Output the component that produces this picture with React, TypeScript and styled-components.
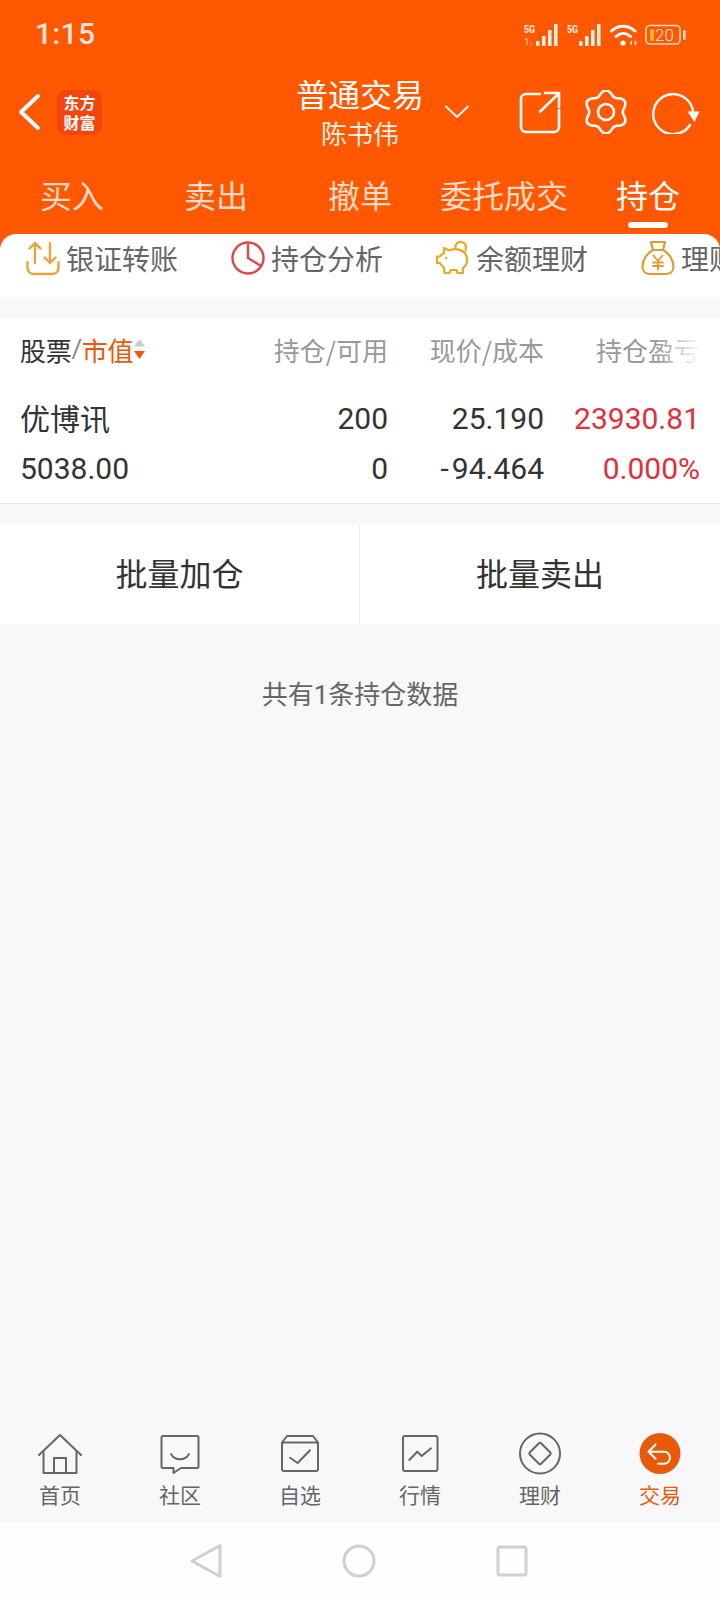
import React from "react";
import styled, { createGlobalStyle } from "styled-components";

const CJK = `"Noto Sans CJK SC", "Noto Sans", sans-serif`;
const NUM = `Roboto, "Noto Sans CJK SC", sans-serif`;
const ORANGE = "#ff5800";

const Global = createGlobalStyle`
  html, body { margin: 0; padding: 0; background: #f7f8fa; }
  * { box-sizing: border-box; }
`;

const Page = styled.div`
  width: 720px;
  height: 1600px;
  display: flex;
  flex-direction: column;
  overflow: hidden;
  background: #f7f8fa;
  font-family: ${CJK};
`;

const TopArea = styled.header`
  background: ${ORANGE};
  color: #fff;
`;

const StatusBar = styled.div`
  height: 70px;
  padding: 0 34px 4px 35px;
  display: flex;
  align-items: center;
  justify-content: space-between;
`;

const Clock = styled.span`
  font-family: ${NUM};
  font-size: 30px;
  font-weight: 500;
  letter-spacing: 0.3px;
  color: rgba(255, 255, 255, 0.85);
`;

const StatusIcons = styled.div`
  display: flex;
  align-items: center;
  gap: 7px;
  margin-top: 4px;
  svg { display: block; }
`;

const Header = styled.div`
  height: 84px;
  padding: 0 20px 0 18px;
  display: flex;
  align-items: center;
`;

const LeftGroup = styled.div`
  flex: none;
  display: flex;
  align-items: center;
  gap: 16px;
  width: 257px;
`;

const Logo = styled.div`
  width: 45px;
  height: 45px;
  border-radius: 9px;
  background: #f5450f;
  display: flex;
  flex-direction: column;
  align-items: center;
  justify-content: center;
  font-size: 16px;
  line-height: 20px;
  font-weight: 700;
  color: #fff;
`;

const TitleBlock = styled.div`
  flex: none;
  width: 170px;
  padding-bottom: 3px;
  display: flex;
  flex-direction: column;
  align-items: center;
`;

const Title = styled.div`
  font-size: 32px;
  line-height: 42px;
  white-space: nowrap;
`;

const SubTitle = styled.div`
  margin-top: 3px;
  font-size: 26px;
  line-height: 32px;
  color: rgba(255, 255, 255, 0.92);
`;

const Caret = styled.svg`
  margin-right: 49px;
  flex: none;
`;

const HeaderActions = styled.div`
  flex: none;
  display: flex;
  align-items: center;
  gap: 22px;
  svg { display: block; }
`;

const Tabs = styled.nav`
  height: 80px;
  display: grid;
  grid-template-columns: repeat(5, 1fr);
  padding-top: 18px;
`;

const Tab = styled.div<{ $active?: boolean }>`
  position: relative;
  text-align: center;
  font-size: 32px;
  line-height: 44px;
  white-space: nowrap;
  color: ${(p) => (p.$active ? "#fff" : "rgba(255,255,255,0.78)")};
  ${(p) =>
    p.$active &&
    `&::after {
      content: "";
      position: absolute;
      left: 50%;
      margin-left: -20px;
      bottom: 6px;
      width: 40px;
      height: 6px;
      border-radius: 3px;
      background: #fff;
    }`}
`;

const QuickWrap = styled.div`
  background: ${ORANGE};
`;

const QuickBar = styled.div`
  height: 64px;
  background: #fff;
  border-radius: 16px 16px 0 0;
  padding: 5px 0 0 26px;
  display: flex;
  align-items: flex-start;
  gap: 53px;
  overflow: hidden;
`;

const QuickItem = styled.div`
  flex: none;
  display: flex;
  align-items: center;
  gap: 6px;
  font-size: 28px;
  line-height: 38px;
  color: #666;
  svg { display: block; flex: none; }
`;

const TableCard = styled.section`
  margin-top: 21px;
  background: #fff;
  border-bottom: 1px solid #e8e9ec;
  padding-bottom: 9px;
`;

const TableGrid = styled.div`
  display: grid;
  grid-template-columns: 1fr 156px 156px 156px;
  padding: 0 20px;
  align-items: center;
`;

const HeaderRow = styled(TableGrid)`
  position: relative;
  height: 64px;
  margin-bottom: 11px;
  padding-bottom: 4px;
  font-size: 26px;
  color: #999;
  &::after {
    content: "";
    position: absolute;
    right: 12px;
    top: 0;
    bottom: 0;
    width: 52px;
    background: linear-gradient(to right, rgba(255,255,255,0), #fff 85%);
  }
`;

const HeadName = styled.div`
  display: flex;
  align-items: center;
  color: #333;
  letter-spacing: -0.3px;
`;

const Slash = styled.span`
  color: #888;
  font-family: ${NUM};
`;

const SortKey = styled.span`
  color: #e8590c;
`;

const HeadCell = styled.div`
  text-align: right;
  white-space: nowrap;
`;

const DataRow = styled(TableGrid)`
  height: 50px;
  padding-bottom: 2px;
`;

const NameCell = styled.div<{ $lift?: boolean }>`
  font-family: ${NUM};
  font-size: 30px;
  color: #333;
  ${(p) => p.$lift && "padding-bottom: 3px;"}
`;

const NumCell = styled.div<{ $red?: boolean }>`
  font-family: ${NUM};
  font-size: 30px;
  text-align: right;
  white-space: nowrap;
  color: ${(p) => (p.$red ? "#e0303a" : "#333")};
`;

const Dash = styled.span`
  letter-spacing: 3px;
`;

const ButtonRow = styled.div`
  margin-top: 20px;
  height: 100px;
  display: grid;
  grid-template-columns: 1fr 1fr;
  background: #fff;
`;

const BatchButton = styled.div<{ $divider?: boolean }>`
  display: flex;
  align-items: center;
  justify-content: center;
  padding-bottom: 4px;
  font-size: 32px;
  color: #333;
  ${(p) => p.$divider && "border-right: 1px solid #eeeff1;"}
`;

const Note = styled.div`
  margin-top: 50px;
  text-align: center;
  font-size: 26px;
  line-height: 42px;
  color: #666;
  font-family: ${NUM};
`;

const Spacer = styled.div`
  flex: 1;
`;

const BottomNav = styled.nav`
  height: 112px;
  background: #f8f8fa;
  display: grid;
  grid-template-columns: repeat(6, 1fr);
  padding-top: 22px;
`;

const NavItem = styled.div<{ $active?: boolean }>`
  display: flex;
  flex-direction: column;
  align-items: center;
  font-size: 21px;
  line-height: 30px;
  color: ${(p) => (p.$active ? "#e8590c" : "#666")};
  svg { display: block; margin-bottom: 3px; }
`;

const SystemNav = styled.div`
  height: 78px;
  background: #fdfdfd;
  display: flex;
  align-items: center;
  justify-content: center;
  gap: 120px;
  padding-right: 3px;
  svg { display: block; }
`;

const Sig = ({ dim }: { dim?: boolean }) => (
  <svg width="36" height="24" viewBox="0 0 36 24">
    <text x="0" y="10" fontFamily="Roboto, sans-serif" fontWeight="700" fontSize="11.5" fill="#fff0e6" textLength="11" lengthAdjust="spacingAndGlyphs">5G</text>
    {dim && <text x="0" y="22" fontFamily="Roboto, sans-serif" fontWeight="700" fontSize="9" fill="#ffb48a">1↓</text>}
    <g fill="#fff0e6">
      <rect x="12" y="18" width="3.5" height="5" rx="1" />
      <rect x="18" y="13" width="3.5" height="10" />
      <rect x="24" y="7" width="3.5" height="16" />
      <rect x="30" y="1" width="3.5" height="22" />
    </g>
  </svg>
);

const Wifi = () => (
  <svg width="28" height="24" viewBox="0 0 28 24" fill="none" stroke="#fff" strokeWidth="3" strokeLinecap="round">
    <path d="M1.5 8 C8 1.5 18 1.5 25 8" />
    <path d="M6 13.5 C10.5 9.5 16 9.5 20.5 13.5" />
    <circle cx="13" cy="20" r="2.6" fill="#fff" stroke="none" />
    <path d="M19.5 20 l2.5 -3 v6 Z M27 20 l-2.5 -3 v6 Z" fill="#ffd9c0" stroke="none" />
  </svg>
);

const Battery = () => (
  <svg width="41" height="22" viewBox="0 0 41 22">
    <rect x="1" y="1.5" width="34" height="18.5" rx="4" fill="none" stroke="#ffd9c0" strokeWidth="1.6" />
    <rect x="5" y="5" width="4" height="12" rx="1" fill="#ffae35" />
    <text x="10" y="17" fontFamily="Roboto, sans-serif" fontWeight="300" fontSize="17" fill="#fff0e6">20</text>
    <rect x="38" y="6" width="2.6" height="10" rx="1.3" fill="#ffd9c0" />
  </svg>
);

const gearPath = (() => {
  const pts: string[] = [];
  for (let i = 0; i < 144; i++) {
    const t = (i / 144) * Math.PI * 2;
    const r = 19.2 + 2.4 * Math.cos(6 * t);
    pts.push(`${(22 + r * Math.sin(t)).toFixed(2)} ${(22 - r * Math.cos(t)).toFixed(2)}`);
  }
  return "M" + pts.join("L") + "Z";
})();

const Pig = () => (
  <svg width="34" height="36" viewBox="0 0 34 36" fill="none" stroke="#e8a820" strokeWidth="2.2" strokeLinejoin="round" strokeLinecap="round">
    <path d="M8 13 L8 8 L13 10.5 C19 8 27 9 30 15 C32.5 21 31 25 27 28 L27 33 H21.5 L20.5 30 H14.5 L13.5 33 H8.5 L8 27.5 C6 26.5 5 24.5 4 23 H1 V16.5 H4 C5 15 6 14 8 13 Z" />
    <circle cx="10" cy="18" r="1.2" fill="#e8a820" stroke="none" />
    <path d="M19.5 7.5 C19 3.5 22.5 1.5 25.5 2 C29 2.5 31 6 29.5 10.5" />
  </svg>
);

const Bag = () => (
  <svg width="34" height="36" viewBox="0 0 34 36" fill="none" stroke="#e09a30" strokeWidth="2.2" strokeLinejoin="round" strokeLinecap="round">
    <path d="M10 2 H24 L22 10 H12 Z" />
    <path d="M12 10 C6 13 1.5 20 1.5 27 C1.5 31.5 5 34 9 34 H25 C29 34 32.5 31.5 32.5 27 C32.5 20 28 13 22 10" />
    <path d="M12.5 15.5 L17 21 L21.5 15.5 M17 21 V29.5 M12 22.5 H22 M12 26 H22" strokeWidth="1.8" />
  </svg>
);

export default function App() {
  return (
    <Page>
      <Global />
      <TopArea>
        <StatusBar>
          <Clock>1:15</Clock>
          <StatusIcons>
            <Sig dim />
            <Sig />
            <Wifi />
            <Battery />
          </StatusIcons>
        </StatusBar>
        <Header>
          <LeftGroup>
            <svg width="23" height="38" viewBox="0 0 23 38" fill="none" stroke="#fff" strokeWidth="4" strokeLinecap="round" strokeLinejoin="round">
              <path d="M20 3 L3 19 L20 35" />
            </svg>
            <Logo>
              <span>东方</span>
              <span>财富</span>
            </Logo>
          </LeftGroup>
          <TitleBlock>
            <Title>普通交易</Title>
            <SubTitle>陈书伟</SubTitle>
          </TitleBlock>
          <Caret width="24" height="14" viewBox="0 0 24 14" fill="none" stroke="#fff" strokeWidth="1.8" strokeLinecap="round" strokeLinejoin="round">
            <path d="M1 1.5 L12 12 L23 1.5" />
          </Caret>
          <HeaderActions>
            <svg width="44" height="44" viewBox="0 0 44 44" fill="none" stroke="#fff" strokeWidth="2.6" strokeLinecap="round" strokeLinejoin="round">
              <path d="M22 4 H8 a5 5 0 0 0 -5 5 V37 a5 5 0 0 0 5 5 H36 a5 5 0 0 0 5 -5 V20" />
              <path d="M22 21.7 L41 3.3 M27 3 H41 V17" />
            </svg>
            <svg width="44" height="44" viewBox="0 0 44 44" fill="none" stroke="#fff" strokeWidth="2.6" strokeLinejoin="round">
              <path d={gearPath} />
              <circle cx="22" cy="22" r="8" />
            </svg>
            <svg width="50" height="44" viewBox="0 0 50 44" fill="none">
              <path d="M43 21 A20 20 0 1 0 40 35" stroke="#fff" strokeWidth="2.4" strokeLinecap="round" />
              <path d="M37.5 21.5 H49.5 L44.5 32 Z" fill="#fff" />
            </svg>
          </HeaderActions>
        </Header>
        <Tabs>
          <Tab>买入</Tab>
          <Tab>卖出</Tab>
          <Tab>撤单</Tab>
          <Tab>委托成交</Tab>
          <Tab $active>持仓</Tab>
        </Tabs>
      </TopArea>

      <QuickWrap>
        <QuickBar>
          <QuickItem>
            <svg width="34" height="36" viewBox="0 0 34 36" fill="none" stroke="#e8a33d" strokeWidth="2.4" strokeLinecap="round" strokeLinejoin="round">
              <path d="M1.5 22 V28 a6 6 0 0 0 6 6 H26.5 a6 6 0 0 0 6 -6 V22" />
              <path d="M9 23 V3 M3.5 8.5 L9 3 L14.5 8.5" />
              <path d="M24 3 V23 M18.5 17.5 L24 23 L29.5 17.5" />
            </svg>
            银证转账
          </QuickItem>
          <QuickItem>
            <svg width="34" height="36" viewBox="0 0 34 36" fill="none" stroke="#e0474c" strokeWidth="2.4" strokeLinecap="round" strokeLinejoin="round">
              <circle cx="17" cy="18" r="15.5" />
              <path d="M17 5 V18 L30 26" />
            </svg>
            持仓分析
          </QuickItem>
          <QuickItem>
            <Pig />
            余额理财
          </QuickItem>
          <QuickItem>
            <Bag />
            理财产品
          </QuickItem>
        </QuickBar>
      </QuickWrap>

      <TableCard>
        <HeaderRow>
          <HeadName>
            股票<Slash>/</Slash>
            <SortKey>市值</SortKey>
            <svg width="13" height="22" viewBox="0 0 13 22">
              <path d="M6.5 1 L12 8.5 H1 Z" fill="#ccc" />
              <path d="M1 13 H12 L6.5 21 Z" fill="#e8590c" />
            </svg>
          </HeadName>
          <HeadCell>持仓/可用</HeadCell>
          <HeadCell>现价/成本</HeadCell>
          <HeadCell>持仓盈亏</HeadCell>
        </HeaderRow>
        <DataRow>
          <NameCell $lift>优博讯</NameCell>
          <NumCell>200</NumCell>
          <NumCell>25.190</NumCell>
          <NumCell $red>23930.81</NumCell>
        </DataRow>
        <DataRow>
          <NameCell>5038.00</NameCell>
          <NumCell>0</NumCell>
          <NumCell><Dash>-</Dash>94.464</NumCell>
          <NumCell $red>0.000%</NumCell>
        </DataRow>
      </TableCard>

      <ButtonRow>
        <BatchButton $divider>批量加仓</BatchButton>
        <BatchButton>批量卖出</BatchButton>
      </ButtonRow>

      <Note>共有1条持仓数据</Note>
      <Spacer />

      <BottomNav>
        <NavItem>
          <svg width="44" height="44" viewBox="0 0 44 44" fill="none" stroke="#666" strokeWidth="2" strokeLinecap="round" strokeLinejoin="round">
            <path d="M1 23 L22 3 L43 23" />
            <path d="M5.5 19.5 V41 H38.5 V19.5" />
            <path d="M16 41 V26 H28 V41" />
          </svg>
          首页
        </NavItem>
        <NavItem>
          <svg width="44" height="44" viewBox="0 0 44 44" fill="none" stroke="#666" strokeWidth="2" strokeLinecap="round" strokeLinejoin="round">
            <path d="M5 4 H39 a1.5 1.5 0 0 1 1.5 1.5 V34.5 a1.5 1.5 0 0 1 -1.5 1.5 H23 L15.5 41 V36 H5 a1.5 1.5 0 0 1 -1.5 -1.5 V5.5 A1.5 1.5 0 0 1 5 4 Z" />
            <path d="M13 22 C17 29 27 29 31 22" />
          </svg>
          社区
        </NavItem>
        <NavItem>
          <svg width="44" height="44" viewBox="0 0 44 44" fill="none" stroke="#666" strokeWidth="2" strokeLinecap="round" strokeLinejoin="round">
            <path d="M4 10.5 L9 4 H35 L40 10.5" />
            <rect x="4" y="10.5" width="36" height="28.5" rx="2" />
            <path d="M12 25.7 L19.7 31 L32 18.3" />
          </svg>
          自选
        </NavItem>
        <NavItem>
          <svg width="44" height="44" viewBox="0 0 44 44" fill="none" stroke="#666" strokeWidth="2" strokeLinecap="round" strokeLinejoin="round">
            <rect x="5" y="4" width="34.5" height="35" rx="2" />
            <path d="M11.3 28 L19.3 19.7 L23.7 24 L33 16.3" />
          </svg>
          行情
        </NavItem>
        <NavItem>
          <svg width="44" height="44" viewBox="0 0 44 44" fill="none" stroke="#666" strokeWidth="2" strokeLinejoin="round">
            <circle cx="22" cy="21.5" r="20" />
            <rect x="14" y="13.5" width="16" height="16" rx="1.5" transform="rotate(45 22 21.5)" />
          </svg>
          理财
        </NavItem>
        <NavItem $active>
          <svg width="44" height="44" viewBox="0 0 44 44" fill="none">
            <circle cx="22" cy="21.5" r="20.5" fill="#e8590a" />
            <path d="M11 19.7 H26 a6 6 0 0 1 0 12 H20 M17.5 12.5 L10.5 19.7 L17.5 26.7" stroke="#fff" strokeWidth="2" strokeLinecap="round" strokeLinejoin="round" />
          </svg>
          交易
        </NavItem>
      </BottomNav>

      <SystemNav>
        <svg width="32" height="36" viewBox="0 0 32 36" fill="none" stroke="#d0d0d0" strokeWidth="3" strokeLinejoin="round">
          <path d="M30 2.5 V33.5 L2 18 Z" />
        </svg>
        <svg width="34" height="34" viewBox="0 0 34 34" fill="none" stroke="#d0d0d0" strokeWidth="3">
          <circle cx="17" cy="17" r="15" />
        </svg>
        <svg width="32" height="32" viewBox="0 0 32 32" fill="none" stroke="#d0d0d0" strokeWidth="3" strokeLinejoin="round">
          <rect x="2" y="2" width="28" height="28" rx="2" />
        </svg>
      </SystemNav>
    </Page>
  );
}
